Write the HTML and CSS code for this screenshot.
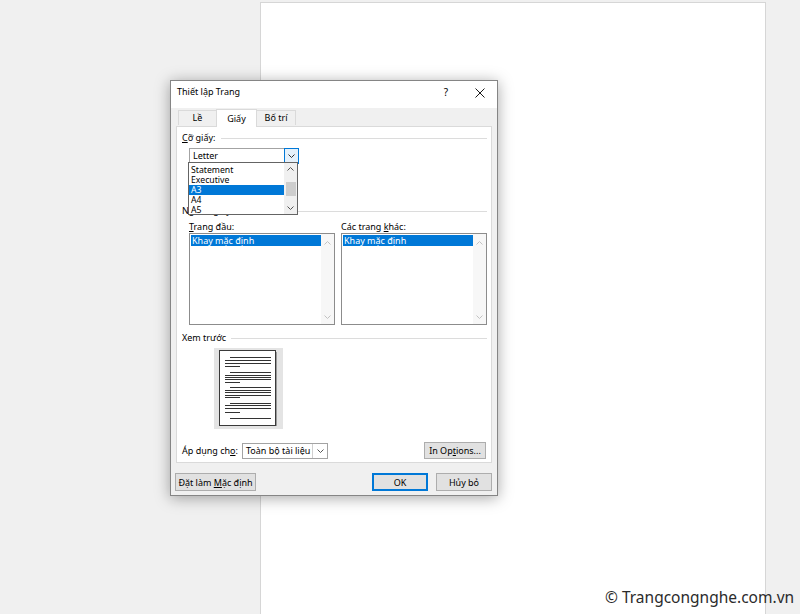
FILE: index.html
```html
<!DOCTYPE html>
<html lang="vi">
<head>
    <meta charset="UTF-8">
    <title>Thiết lập Trang</title>
    <link rel="stylesheet" href="styles.css">
</head>
<body>
    <div class="sheet"></div>

    <div class="dialog">
        <div class="titlebar">
            <span class="title">Thiết lập Trang</span>
            <span class="help">?</span>
            <span class="close">
                <svg width="10" height="10" viewBox="0 0 10 10"><path d="M0.5 0.5 L9.5 9.5 M9.5 0.5 L0.5 9.5" stroke="#1a1a1a" stroke-width="1" fill="none"/></svg>
            </span>
        </div>

        <div class="tabs">
            <span class="tab">Lề</span>
            <span class="tab active">Giấy</span>
            <span class="tab">Bố trí</span>
        </div>

        <div class="panel">
            <div class="grp"><span><u>C</u>ỡ giấy:</span></div>
            <div class="combo size">
                <span class="val">Letter</span>
                <span class="drop hot">
                    <svg width="7" height="4" viewBox="0 0 7 4"><polyline points="0.5,0.5 3.5,3.5 6.5,0.5" stroke="#333" fill="none"/></svg>
                </span>
            </div>

            <div class="grp tray-head"><span>Nguồn giấy</span></div>
            <div class="trays">
                <div class="tray">
                    <label><u>T</u>rang đầu:</label>
                    <div class="listbox">
                        <div class="items"><div class="sel">Khay mặc định</div></div>
                        <div class="vs">
                            <svg width="7" height="4" viewBox="0 0 7 4"><polyline points="0.5,3.5 3.5,0.5 6.5,3.5" stroke="#c2c2c2" fill="none"/></svg>
                            <svg width="7" height="4" viewBox="0 0 7 4"><polyline points="0.5,0.5 3.5,3.5 6.5,0.5" stroke="#c2c2c2" fill="none"/></svg>
                        </div>
                    </div>
                </div>
                <div class="tray">
                    <label>Các trang <u>k</u>hác:</label>
                    <div class="listbox">
                        <div class="items"><div class="sel">Khay mặc định</div></div>
                        <div class="vs">
                            <svg width="7" height="4" viewBox="0 0 7 4"><polyline points="0.5,3.5 3.5,0.5 6.5,3.5" stroke="#c2c2c2" fill="none"/></svg>
                            <svg width="7" height="4" viewBox="0 0 7 4"><polyline points="0.5,0.5 3.5,3.5 6.5,0.5" stroke="#c2c2c2" fill="none"/></svg>
                        </div>
                    </div>
                </div>
            </div>

            <div class="grp preview-head"><span>Xem trước</span></div>
            <div class="preview">
                <svg width="58" height="76" viewBox="0 0 58 76" shape-rendering="crispEdges">
                    <rect x="0.5" y="0.5" width="56" height="75" fill="#fff" stroke="#3a3a3a"/>
                    <line x1="57" y1="2" x2="57" y2="76" stroke="#9a9a9a"/>
                    <g stroke="#333" stroke-width="1">
                        <line x1="11" y1="7.5" x2="52" y2="7.5"/>
                        <line x1="6" y1="10.5" x2="52" y2="10.5"/>
                        <line x1="6" y1="13.5" x2="52" y2="13.5"/>
                        <line x1="6" y1="16.5" x2="21" y2="16.5"/>
                        <line x1="11" y1="22.5" x2="52" y2="22.5"/>
                        <line x1="6" y1="25.5" x2="52" y2="25.5"/>
                        <line x1="6" y1="27.5" x2="52" y2="27.5"/>
                        <line x1="6" y1="29.5" x2="52" y2="29.5"/>
                        <line x1="6" y1="32.5" x2="21" y2="32.5"/>
                        <line x1="11" y1="37.5" x2="52" y2="37.5"/>
                        <line x1="6" y1="40.5" x2="52" y2="40.5"/>
                        <line x1="6" y1="42.5" x2="52" y2="42.5"/>
                        <line x1="6" y1="45.5" x2="52" y2="45.5"/>
                        <line x1="6" y1="47.5" x2="21" y2="47.5"/>
                        <line x1="11" y1="53.5" x2="52" y2="53.5"/>
                        <line x1="6" y1="55.5" x2="52" y2="55.5"/>
                        <line x1="6" y1="58.5" x2="52" y2="58.5"/>
                        <line x1="6" y1="62.5" x2="21" y2="62.5"/>
                        <line x1="11" y1="68.5" x2="52" y2="68.5"/>
                    </g>
                </svg>
            </div>

            <div class="apply">
                <span class="apply-label">Áp dụng ch<u>o</u>:</span>
                <div class="combo whole">
                    <span class="val">Toàn bộ tài liệu</span>
                    <span class="drop">
                        <svg width="7" height="4" viewBox="0 0 7 4"><polyline points="0.5,0.5 3.5,3.5 6.5,0.5" stroke="#555" fill="none"/></svg>
                    </span>
                </div>
                <button class="btn options">In Op<u>t</u>ions...</button>
            </div>

            <div class="droplist">
                <div class="opts">
                    <div>Statement</div>
                    <div>Executive</div>
                    <div class="sel">A3</div>
                    <div>A4</div>
                    <div>A5</div>
                </div>
                <div class="vs">
                    <svg width="7" height="4" viewBox="0 0 7 4"><polyline points="0.5,3.5 3.5,0.5 6.5,3.5" stroke="#555" fill="none"/></svg>
                    <span class="thumb"></span>
                    <svg width="7" height="4" viewBox="0 0 7 4"><polyline points="0.5,0.5 3.5,3.5 6.5,0.5" stroke="#555" fill="none"/></svg>
                </div>
            </div>
        </div>

        <div class="footer">
            <button class="btn">Đặt làm <u>M</u>ặc định</button>
            <span class="spacer"></span>
            <button class="btn ok">OK</button>
            <button class="btn">Hủy bỏ</button>
        </div>
    </div>

    <div class="mark">© Trangcongnghe.com.vn</div>
</body>
</html>
```

FILE: styles.css
```css
* {
    box-sizing: border-box;
}

body {
    margin: 0;
    height: 614px;
    overflow: hidden;
    background: #f0f0f0;
    font-family: 'Noto Sans', 'Open Sans', sans-serif;
    font-size: 9px;
    color: #000;
}

/* trang giấy phía sau */
.sheet {
    margin: 2px 0 0 260px;
    width: 506px;
    height: 630px;
    background: #fff;
    border: 1px solid #d6d6d6;
}

/* hộp thoại */
.dialog {
    position: absolute;
    left: 170px;
    top: 80px;
    width: 328px;
    height: 416px;
    background: #f0f0f0;
    border: 1px solid #858585;
    box-shadow: 0 2px 14px rgba(0,0,0,0.35);
}

.titlebar {
    height: 27px;
    background: #fff;
    display: flex;
    align-items: flex-start;
    padding: 5px 0 0 6px;
    line-height: 12px;
}

.title {
    flex: 1;
}

.help {
    width: 20px;
    text-align: center;
    margin-right: 7px;
    font-size: 10px;
}

.close {
    width: 34px;
    display: flex;
    justify-content: center;
    padding-top: 2px;
}

.tabs {
    display: flex;
    align-items: flex-end;
    height: 18px;
    padding-left: 7px;
    position: relative;
    z-index: 2;
}

.tab {
    height: 15px;
    line-height: 14px;
    text-align: center;
    border: 1px solid #dadada;
    border-bottom: none;
    margin-bottom: 1px;
}

.tab:nth-child(1) { width: 38px; border-right: none; }
.tab:nth-child(2) { width: 41px; }
.tab:nth-child(3) { width: 39px; border-left: none; }

.tab.active {
    height: 18px;
    line-height: 17px;
    background: #fff;
    margin-bottom: -1px;
}

.panel {
    position: relative;
    margin: 0 5px;
    height: 337px;
    background: #fff;
    border: 1px solid #dadada;
}

/* tiêu đề nhóm có đường kẻ */
.grp {
    display: flex;
    align-items: center;
    height: 12px;
    line-height: 12px;
    margin-top: 5px;
    padding: 0 4px 0 5px;
}

.grp::after {
    content: "";
    flex: 1;
    height: 1px;
    background: #dcdcdc;
    margin-left: 5px;
}

.tray-head { margin-top: 41px; }
.preview-head { margin-top: 7px; }

.combo {
    display: flex;
    height: 16px;
    border: 1px solid #a3a3a3;
    background: #fff;
    line-height: 14px;
}

.combo .val {
    flex: 1;
    padding-left: 3px;
    white-space: nowrap;
}

.combo .drop {
    width: 15px;
    display: flex;
    align-items: center;
    justify-content: center;
    border-left: 1px solid #d0d0d0;
}

.combo .drop.hot {
    border: 1px solid #0078d7;
    background: #e5f1fb;
    margin: -1px -1px -1px 0;
}

.combo.size {
    width: 110px;
    margin: 4px 0 0 12px;
}

.trays {
    display: flex;
    gap: 6px;
    margin: 4px 0 0 12px;
}

.tray {
    width: 146px;
}

.tray label {
    display: block;
    height: 12px;
    line-height: 12px;
}

.listbox {
    display: flex;
    height: 92px;
    border: 1px solid #8c8c8c;
}

.listbox .items {
    flex: 1;
    padding: 1px 0 0 1px;
}

.listbox .sel {
    height: 11px;
    line-height: 11px;
    padding-left: 1px;
    background: #0078d7;
    color: #fff;
}

.listbox .vs {
    width: 13px;
    background: #f7f7f7;
    display: flex;
    flex-direction: column;
    align-items: center;
    justify-content: space-between;
    padding: 7px 0 5px;
}

.preview {
    width: 69px;
    height: 81px;
    margin: 4px 0 0 37px;
    padding: 2px 0 0 5px;
    background: #e4e4e4;
}

.preview svg {
    display: block;
}

.apply {
    display: flex;
    align-items: center;
    margin-top: 13px;
    padding: 0 5px;
}

.apply-label {
    width: 60px;
}

.combo.whole {
    width: 86px;
}

.btn {
    font-family: inherit;
    font-size: 9px;
    color: #000;
    background: #e1e1e1;
    border: 1px solid #adadad;
    padding: 0;
    height: 18px;
}

.btn.options {
    margin-left: auto;
    width: 62px;
    height: 17px;
}

/* danh sách thả xuống đang mở */
.droplist {
    position: absolute;
    left: 11px;
    top: 35px;
    width: 110px;
    height: 53px;
    display: flex;
    background: #fff;
    border: 1px solid #646464;
    overflow: hidden;
    z-index: 3;
}

.droplist .opts {
    flex: 1;
    padding-top: 2px;
    font-size: 8.7px;
}

.droplist .opts div {
    height: 10px;
    line-height: 10px;
    padding-left: 2px;
}

.droplist .opts .sel {
    background: #0078d7;
    color: #fff;
}

.droplist .vs {
    width: 13px;
    background: #f0f0f0;
    display: flex;
    flex-direction: column;
    align-items: center;
    padding: 4px 0 4px;
}

.droplist .thumb {
    width: 10px;
    height: 14px;
    background: #cdcdcd;
    margin: 11px 0 auto;
}

.footer {
    display: flex;
    gap: 8px;
    margin-top: 10px;
    padding: 0 5px 0 4px;
}

.footer .btn:first-child {
    width: 81px;
}

.spacer {
    flex: 1;
}

.footer .btn.ok,
.footer .btn:last-child {
    width: 56px;
}

.btn.ok {
    border: 2px solid #0078d7;
}

.mark {
    position: absolute;
    left: 605px;
    top: 587px;
    font-size: 15.5px;
    line-height: 20px;
    color: #2b2b2b;
    white-space: nowrap;
}
```
